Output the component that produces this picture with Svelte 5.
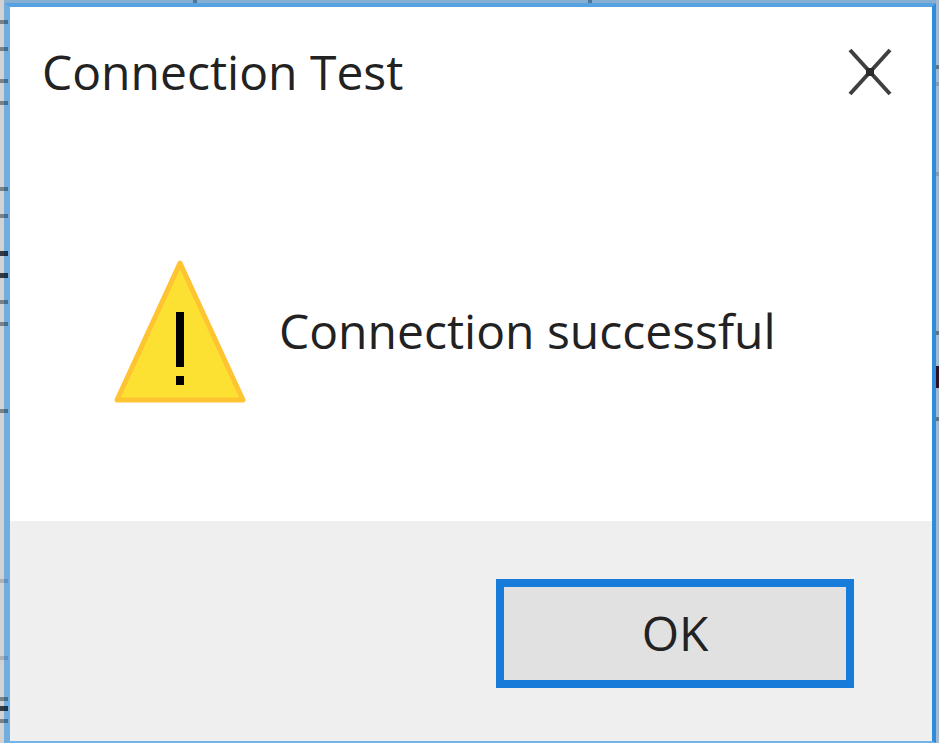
<script>
  const leftMarks = [
    { y: 22, tone: 'mid' }, { y: 49, tone: 'mid' }, { y: 81, tone: 'mid' }, { y: 103, tone: 'mid' },
    { y: 189, tone: 'mid' }, { y: 216, tone: 'mid' }, { y: 253, tone: 'dark' }, { y: 275, tone: 'dark' },
    { y: 302, tone: 'mid' }, { y: 324, tone: 'mid' }, { y: 411, tone: 'mid' }, { y: 581, tone: 'pale' },
    { y: 658, tone: 'pale' }, { y: 699, tone: 'mid' }, { y: 708, tone: 'dark' }, { y: 721, tone: 'mid' }
  ];
  const rightMarks = [
    { y: 67, tone: 'mid' }, { y: 84, tone: 'pale' }, { y: 174, tone: 'pale' },
    { y: 333, tone: 'mid' }, { y: 419, tone: 'mid' }
  ];
  let open = $state(true);
  const close = () => (open = false);
</script>

<main class="backdrop">
  {#if open}
    <div class="dialog" role="alertdialog" aria-labelledby="title" aria-describedby="message">
      <header class="titlebar">
        <h1 id="title">Connection Test</h1>
        <button class="close" aria-label="Close" onclick={close}>
          <svg viewBox="0 0 44 48" width="44" height="48" aria-hidden="true">
            <path d="M2 2 42 46M42 2 2 46" fill="none" stroke="#404040" stroke-width="4" />
            <path d="M18 20h8v8h-8z" fill="#2b2b2b" />
          </svg>
        </button>
      </header>
      <section class="content">
        <svg class="warning" viewBox="0 0 134 146" width="134" height="146" aria-hidden="true">
          <path d="M67 5 130 142H4Z" fill="#fce032" stroke="#ffc431" stroke-width="5" stroke-linejoin="round" />
          <path d="M63 54h8v55h-8zM63 118h8v9h-8z" fill="#000" />
        </svg>
        <p id="message">Connection successful</p>
      </section>
      <footer class="actions">
        <button class="ok" onclick={close}>OK</button>
      </footer>
    </div>
  {/if}
  <div class="marks left" aria-hidden="true">
    {#each leftMarks as mark}
      <i class={mark.tone} style:top="{mark.y - 2}px"></i>
    {/each}
  </div>
  <div class="marks right" aria-hidden="true">
    {#each rightMarks as mark}
      <i class={mark.tone} style:top="{mark.y - 2}px"></i>
    {/each}
    <i class="dot"></i>
  </div>
  <div class="marks top" aria-hidden="true">
    <i></i><i></i>
  </div>
</main>

<style>
  :global(body) {
    margin: 0;
  }

  .backdrop {
    position: relative;
    box-sizing: border-box;
    display: flex;
    min-height: 100vh;
    padding: 3px 3px 0 4px;
    overflow: hidden;
    background: linear-gradient(90deg, #d2d2d2 0 4px, #85b0d3 4px calc(100% - 3px), #a3b9cd calc(100% - 3px));
    font-family: "Segoe UI", "Open Sans", "Noto Sans", sans-serif;
    font-size: 48px;
    line-height: 60px;
    color: #222;
  }

  .dialog {
    flex: 1;
    display: flex;
    flex-direction: column;
    min-width: 0;
    border: 4px solid #2f8cdc;
    border-top-color: #58a2e1;
    border-left: 6px solid #71aedf;
    border-bottom: 2px solid #75b3e6;
    background: #fff;
  }

  .titlebar {
    box-sizing: border-box;
    display: flex;
    align-items: center;
    justify-content: space-between;
    height: 128px;
    padding: 2px 40px 0 32px;
  }

  h1,
  p {
    margin: 0;
    font-size: inherit;
    font-weight: 400;
    white-space: nowrap;
  }

  button {
    font: inherit;
    color: inherit;
    cursor: pointer;
  }

  .close {
    display: flex;
    padding: 0;
    border: 0;
    background: none;
  }

  .content {
    flex: 1;
    display: flex;
    align-items: center;
    gap: 32px;
    padding: 6px 40px 0 103px;
  }

  .warning {
    flex: none;
  }

  .actions {
    box-sizing: border-box;
    display: flex;
    align-items: center;
    justify-content: flex-end;
    height: 220px;
    padding: 4px 78px 0 0;
    background: #efefef;
  }

  .ok {
    box-sizing: border-box;
    width: 358px;
    height: 109px;
    padding: 0;
    border: 8px solid #167bd9;
    background: #e1e1e1;
  }

  .marks {
    position: absolute;
    top: 0;
    bottom: 0;
    width: 8px;
  }

  .marks i {
    position: absolute;
    left: 0;
    width: 100%;
    height: 4px;
  }

  .left {
    left: 0;
  }

  .right {
    right: 0;
    width: 3px;
  }

  .marks .mid {
    background: rgb(20 30 40 / 45%);
  }

  .marks .dark {
    height: 5px;
    background: rgb(0 10 20 / 75%);
  }

  .marks .pale {
    background: rgb(20 30 40 / 18%);
  }

  .marks .dot {
    top: 366px;
    height: 22px;
    background: #2a1020;
  }

  .top {
    left: 193px;
    bottom: auto;
    display: flex;
    justify-content: space-between;
    width: 399px;
  }

  .top i {
    position: static;
    width: 4px;
    height: 3px;
    background: #4b7897;
  }
</style>
